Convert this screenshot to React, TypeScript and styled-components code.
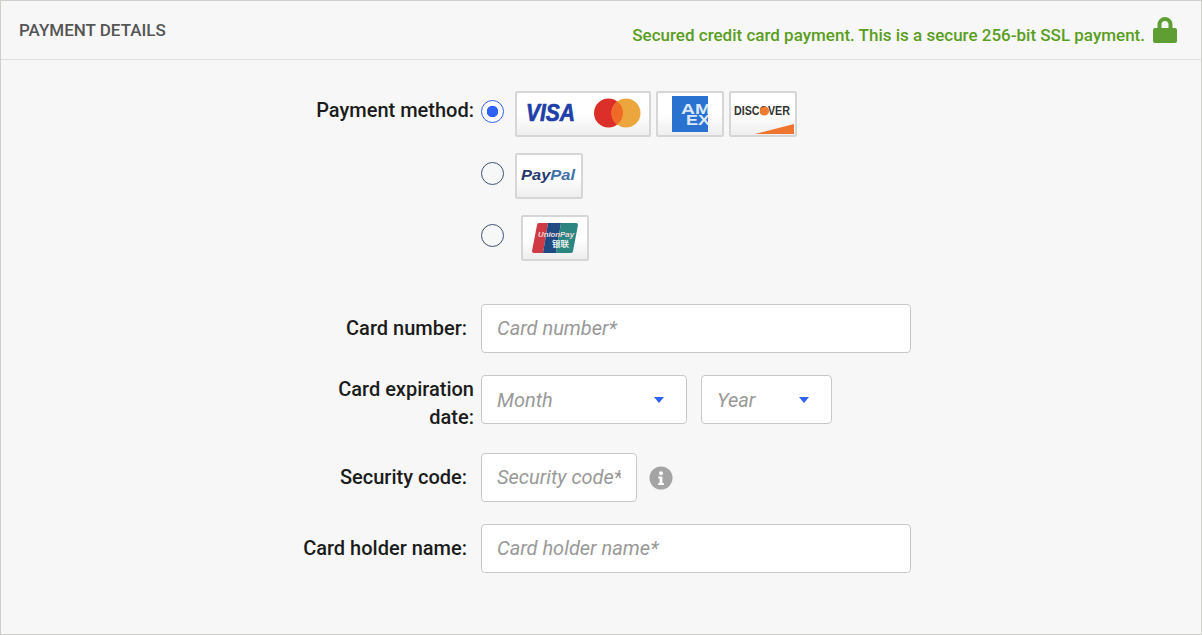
import React from 'react';
import styled, { createGlobalStyle } from 'styled-components';

const GlobalStyle = createGlobalStyle`
  html, body {
    margin: 0;
    padding: 0;
    background: #f7f7f7;
  }
  * {
    box-sizing: border-box;
  }
`;

const Panel = styled.div`
  width: 1202px;
  height: 635px;
  overflow: hidden;
  background: #f7f7f7;
  border: 1px solid #cfcfcb;
  font-family: Roboto, 'Liberation Sans', sans-serif;
  color: #1c1c1c;
`;

const PanelHeader = styled.div`
  display: flex;
  justify-content: space-between;
  height: 59px;
  padding: 0 24px 0 18px;
  border-bottom: 1px solid #dedede;
`;

const PanelTitle = styled.h2`
  margin: 20px 0 0;
  font-size: 17px;
  line-height: 19px;
  font-weight: 500;
  color: #555555;
`;

const SecureNote = styled.div`
  display: flex;
  align-items: flex-start;
  gap: 8px;
  padding-top: 16px;
  font-size: 17px;
  font-weight: 500;
  line-height: 19px;
  color: #5a9e1f;
`;

const NoteText = styled.span`
  margin-top: 9px;
`;

const Form = styled.form`
  display: flex;
  flex-direction: column;
  padding-top: 31px;
`;

const Row = styled.div<{ $gap: number }>`
  display: flex;
  margin-bottom: ${(p) => p.$gap}px;
`;

const Label = styled.label<{ $inset?: boolean; $top?: number }>`
  width: 473px;
  flex: none;
  padding-right: ${(p) => (p.$inset ? 7 : 0)}px;
  padding-top: ${(p) => p.$top ?? 0}px;
  text-align: right;
  font-size: 20px;
  font-weight: 500;
  line-height: 28px;
  color: #1c1c1c;
`;

const Controls = styled.div`
  display: flex;
  align-items: flex-start;
  margin-left: 7px;
`;

const MethodList = styled.div`
  display: flex;
  flex-direction: column;
  gap: 16px;
  margin-left: 7px;
`;

const Method = styled.div`
  display: flex;
  align-items: flex-start;
`;

const Radio = styled.input.attrs({ type: 'radio', name: 'method' })`
  appearance: none;
  flex: none;
  width: 23px;
  height: 23px;
  margin: 9px 11px 0 0;
  border: 1.5px solid #3f5170;
  border-radius: 50%;
  background: transparent;

  &:checked {
    border-color: #2f62f2;
    background: radial-gradient(circle, #2f62f2 0 5.5px, #ffffff 6px);
  }
`;

const LogoGroup = styled.div<{ $shift?: number }>`
  display: flex;
  gap: 5px;
  margin-left: ${(p) => p.$shift ?? 0}px;
`;

const CardLogo = styled.div<{ $width: number }>`
  display: flex;
  align-items: center;
  justify-content: center;
  width: ${(p) => p.$width}px;
  height: 46px;
  border: 2px solid #d6d6d6;
  border-radius: 2px;
  background: linear-gradient(#ffffff 50%, #eeeeee);
  overflow: hidden;
`;

const Field = styled.input<{ $width: number }>`
  width: ${(p) => p.$width}px;
  height: 49px;
  padding: 0 15px 1px;
  border: 1px solid #c8c8c8;
  border-radius: 4px;
  background: #ffffff;
  font-family: inherit;
  font-size: 20px;
  font-style: italic;
  outline: none;

  &::placeholder {
    color: #999999;
    opacity: 1;
  }
`;

const SelectBox = styled.div<{ $width: number }>`
  display: flex;
  align-items: center;
  justify-content: space-between;
  width: ${(p) => p.$width}px;
  height: 49px;
  padding: 0 22px 0 15px;
  border: 1px solid #c8c8c8;
  border-radius: 4px;
  background: #ffffff;
  font-size: 20px;
  font-style: italic;
  color: #999999;
`;

const Caret = styled.span`
  width: 0;
  height: 0;
  border-left: 5.5px solid transparent;
  border-right: 5.5px solid transparent;
  border-top: 6px solid #2f62f2;
`;

const SelectGap = styled.div`
  width: 14px;
`;

const InfoBadge = styled.span`
  display: flex;
  margin: 13px 0 0 12px;
`;

const LockIcon = () => (
  <svg width="24" height="26" viewBox="0 0 24 26">
    <path d="M6.5 12V7.5a5.5 5.5 0 0 1 11 0V12" fill="none" stroke="#5f9e32" strokeWidth="4" />
    <rect x="0" y="11" width="24" height="15" rx="2" fill="#5f9e32" />
  </svg>
);

const InfoIcon = () => (
  <svg width="24" height="24" viewBox="0 0 24 24">
    <circle cx="12" cy="12" r="11.5" fill="#a4a4a4" />
    <circle cx="12" cy="7.2" r="2" fill="#ffffff" />
    <path d="M9.2 10.4h4.2v6.6h1.4v2H9.2v-2h1.4v-4.6H9.2z" fill="#ffffff" />
  </svg>
);

const VisaMastercard = () => (
  <svg width="122" height="36" viewBox="0 0 122 36">
    <text x="4" y="25" fontFamily="'Liberation Sans', sans-serif" fontSize="23" fontWeight="700" fontStyle="italic" fill="#1f3fa8" stroke="#1f3fa8" strokeWidth="0.7" textLength="49" lengthAdjust="spacingAndGlyphs">VISA</text>
    <circle cx="86.5" cy="17" r="14.5" fill="#dc2f2a" />
    <circle cx="104" cy="17" r="14.5" fill="#eba63e" />
    <path d="M95.25 5.44A14.5 14.5 0 0 1 95.25 28.56A14.5 14.5 0 0 1 95.25 5.44z" fill="#ef6a26" />
  </svg>
);

const AmexLogo = () => (
  <svg width="36" height="36" viewBox="0 0 36 36">
    <rect width="36" height="36" fill="#2a72cf" />
    <text x="9" y="18" fontFamily="'Liberation Sans', sans-serif" fontSize="14.5" fontWeight="700" fill="#dbe8f8" textLength="30" lengthAdjust="spacingAndGlyphs">AM</text>
    <text x="14" y="29" fontFamily="'Liberation Sans', sans-serif" fontSize="14.5" fontWeight="700" fill="#dbe8f8" textLength="24" lengthAdjust="spacingAndGlyphs">EX</text>
  </svg>
);

const DiscoverLogo = () => (
  <svg width="64" height="42" viewBox="0 0 64 42">
    <text x="3" y="22" fontFamily="'Liberation Sans', sans-serif" fontSize="12" fontWeight="700" fill="#333333" textLength="56" lengthAdjust="spacingAndGlyphs">DISCOVER</text>
    <circle cx="33.5" cy="18" r="4.6" fill="#ee7b30" />
    <path d="M24 41 L63 31 V41 z" fill="#ee7430" />
  </svg>
);

const PaypalLogo = () => (
  <svg width="60" height="26" viewBox="0 0 60 26">
    <text x="2" y="17" fontFamily="'Liberation Sans', sans-serif" fontSize="15" fontWeight="700" fontStyle="italic" textLength="54" lengthAdjust="spacingAndGlyphs">
      <tspan fill="#25396f">Pay</tspan>
      <tspan fill="#3e72a8">Pal</tspan>
    </text>
  </svg>
);

const UnionPayLogo = () => (
  <svg width="46" height="30" viewBox="0 0 46 30">
    <path d="M7 0h9l-5 30H2a2 2 0 0 1-2-2L5 2a2 2 0 0 1 2-2z" fill="#cf3a44" />
    <path d="M16 0h13l-5 30H11z" fill="#1f4b82" />
    <path d="M29 0h15a2 2 0 0 1 2 2l-5 26a2 2 0 0 1-2 2H24z" fill="#2b8581" />
    <text x="6" y="14" fontFamily="'Liberation Sans', sans-serif" fontSize="7.5" fontWeight="700" fontStyle="italic" fill="#f0dcdc" textLength="36" lengthAdjust="spacingAndGlyphs">UnionPay</text>
    <text x="20" y="24" fontFamily="'Noto Sans CJK SC', sans-serif" fontSize="8.5" fontWeight="700" fill="#e6f0ee">银联</text>
  </svg>
);

const App: React.FC = () => {
  return (
    <>
      <GlobalStyle />
      <Panel>
        <PanelHeader>
          <PanelTitle>PAYMENT DETAILS</PanelTitle>
          <SecureNote>
            <NoteText>Secured credit card payment. This is a secure 256-bit SSL payment.</NoteText>
            <LockIcon />
          </SecureNote>
        </PanelHeader>
        <Form>
          <Row $gap={43}>
            <Label $top={5}>Payment method:</Label>
            <MethodList>
              <Method>
                <Radio defaultChecked />
                <LogoGroup>
                  <CardLogo $width={136}><VisaMastercard /></CardLogo>
                  <CardLogo $width={68}><AmexLogo /></CardLogo>
                  <CardLogo $width={68}><DiscoverLogo /></CardLogo>
                </LogoGroup>
              </Method>
              <Method>
                <Radio />
                <LogoGroup>
                  <CardLogo $width={68}><PaypalLogo /></CardLogo>
                </LogoGroup>
              </Method>
              <Method>
                <Radio />
                <LogoGroup $shift={6}>
                  <CardLogo $width={68}><UnionPayLogo /></CardLogo>
                </LogoGroup>
              </Method>
            </MethodList>
          </Row>
          <Row $gap={22}>
            <Label $inset $top={10}>Card number:</Label>
            <Controls>
              <Field $width={430} placeholder="Card number*" />
            </Controls>
          </Row>
          <Row $gap={22}>
            <Label>Card expiration<br />date:</Label>
            <Controls>
              <SelectBox $width={206}>Month<Caret /></SelectBox>
              <SelectGap />
              <SelectBox $width={131}>Year<Caret /></SelectBox>
            </Controls>
          </Row>
          <Row $gap={22}>
            <Label $inset $top={10}>Security code:</Label>
            <Controls>
              <Field $width={156} placeholder="Security code*" />
              <InfoBadge><InfoIcon /></InfoBadge>
            </Controls>
          </Row>
          <Row $gap={0}>
            <Label $inset $top={10}>Card holder name:</Label>
            <Controls>
              <Field $width={430} placeholder="Card holder name*" />
            </Controls>
          </Row>
        </Form>
      </Panel>
    </>
  );
};

export default App;
